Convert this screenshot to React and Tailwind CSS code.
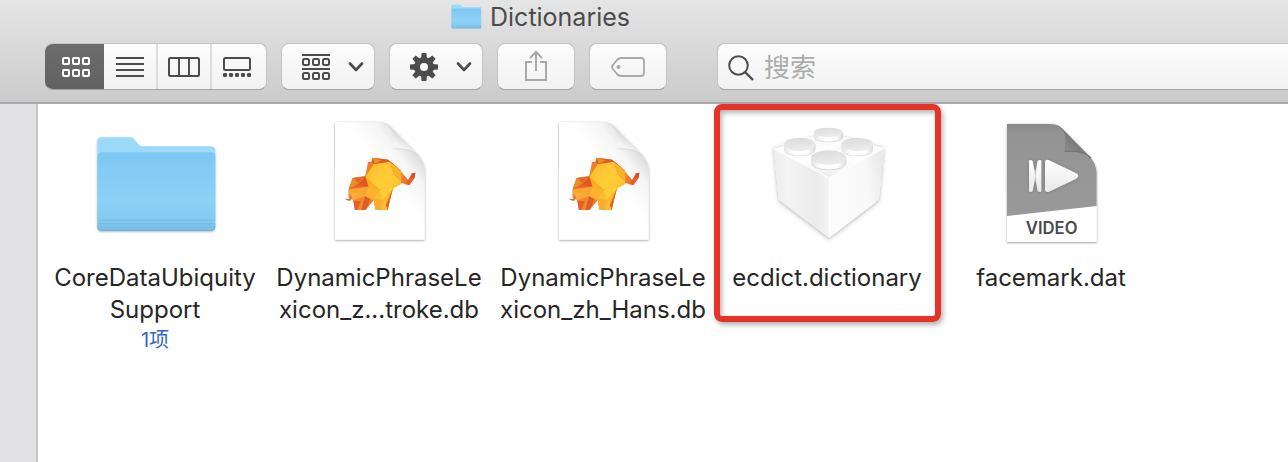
import React from "react";

function FolderShape({ id, className }) {
  return (
    <svg viewBox="0 0 128 128" className={className} aria-hidden="true">
      <defs>
        <linearGradient id={`${id}-front`} x1="0" y1="0" x2="0" y2="1">
          <stop offset="0" stopColor="#7ec7f3" />
          <stop offset="0.62" stopColor="#8dd1f7" />
          <stop offset="0.85" stopColor="#85caf0" />
          <stop offset="1" stopColor="#79bfe8" />
        </linearGradient>
        <filter id={`${id}-sh`} x="-10%" y="-10%" width="120%" height="125%">
          <feDropShadow dx="0" dy="3" stdDeviation="3" floodOpacity="0.3" />
        </filter>
      </defs>
      <g transform="translate(-11 2) scale(.33333)">
        <g filter={`url(#${id}-sh)`}>
          <path d="M52 66Q52 52 66 52H150Q159 52 164 59L174 72Q179 79 188 79H390Q406 79 406 94V320Q406 332 394 332H64Q52 332 52 320Z" fill="#9bdaf9" />
        </g>
        <path d="M52 110Q52 97 66 97H392Q406 97 406 110V320Q406 332 394 332H64Q52 332 52 320Z" fill={`url(#${id}-front)`} />
        <path d="M53 301H405M53 311H405M53 321H405" stroke="#6db4de" strokeWidth="3" opacity=".6" />
        <path d="M53 320Q54 331 64 331H394Q404 331 405 320" fill="none" stroke="#68acd4" strokeWidth="2.5" />
      </g>
    </svg>
  );
}

function MammothFile({ id }) {
  return (
    <svg viewBox="0 0 128 128" className="size-32" aria-hidden="true">
      <defs>
        <linearGradient id={`${id}-page`} x1="0.55" y1="0.45" x2="0.88" y2="0.12">
          <stop offset="0" stopColor="#ffffff" />
          <stop offset="0.5" stopColor="#f6f6f6" />
          <stop offset="1" stopColor="#cfcfcf" />
        </linearGradient>
        <linearGradient id={`${id}-curl`} x1="0.1" y1="1" x2="0.6" y2="0.35">
          <stop offset="0" stopColor="#ffffff" />
          <stop offset="0.6" stopColor="#f4f4f4" />
          <stop offset="1" stopColor="#d4d4d4" />
        </linearGradient>
        <linearGradient id={`${id}-gold`} x1="0" y1="0" x2="1" y2="1">
          <stop offset="0" stopColor="#fbb62a" />
          <stop offset="0.6" stopColor="#fdd03a" />
          <stop offset="1" stopColor="#fbbb2a" />
        </linearGradient>
        <filter id={`${id}-sh`} x="-10%" y="-10%" width="120%" height="120%">
          <feDropShadow dx="0" dy="2" stdDeviation="3" floodOpacity="0.42" />
        </filter>
      </defs>
      <g transform="translate(5 -8) scale(.33333)">
        <path d="M45 37H172Q198 37 213 52L292 132Q314 156 314 184V389H45Z" fill={`url(#${id}-page)`} filter={`url(#${id}-sh)`} />
        <path d="M180 37Q218 44 220 80L218 116Q276 112 297 139L211 50Q198 38 180 37Z" fill={`url(#${id}-curl)`} />
        <path d="M218 117Q272 112 297 139" fill="none" stroke="#cfcfcf" strokeWidth="2" />
      </g>
      <g transform="translate(25 32) scale(.33333)">
        <path d="M38 84L74 78L90 55L84 36L98 35L98 23L145 29L182 60L186 100L158 115L143 180H107L102 150L77 180H45L40 150L26 140L26 118Z" fill="#f0862a" />
        <path d="M98 23L145 29L182 62L148 37L102 43L94 36Z" fill="#dc5b22" />
        <path d="M98 23L104 42L125 31Z" fill="#f08a2c" />
        <path d="M84 36L102 43L90 57L76 78Z" fill="#ef7d29" />
        <path d="M102 43L148 35L182 62L186 100L158 116L119 119L76 80Z" fill={`url(#${id}-gold)`} />
        <path d="M148 35L158 74L119 119L112 60Z" fill="#fdcb36" opacity=".65" />
        <path d="M148 35L182 62L186 98L160 74Z" fill="#f8b12c" />
        <path d="M182 62L190 73L197 100L184 98Z" fill="#f18b27" />
        <path d="M190 73L204 90L216 70L226 68L224 84L208 106L196 103Z" fill="#e3602a" />
        <path d="M188 74L204 91L196 103L184 98Z" fill="#ed7b2b" />
        <path d="M216 70L226 68L224 84L214 84Z" fill="#ce5128" />
        <path d="M38 84L76 79L86 96L84 110L26 118Z" fill="#e66a29" />
        <path d="M38 84L54 100L26 118Z" fill="#f18c30" />
        <path d="M76 79L88 110L54 106Z" fill="#dc5824" />
        <path d="M76 79L119 119L86 112Z" fill="#faae2a" />
        <path d="M26 118L86 110L119 119L102 150L75 146L40 152L26 140Z" fill="#f8a42f" />
        <path d="M26 118L75 138L40 152L26 140Z" fill="#f9ab3a" />
        <path d="M40 150L75 138L68 180H45Z" fill="#f0862d" />
        <path d="M40 152L62 154L52 180H45Z" fill="#e2602a" />
        <path d="M75 138L92 148L77 180H64Z" fill="#de5e27" />
        <path d="M86 112L119 119L102 150L75 138Z" fill="#fbb430" />
        <path d="M119 119L160 112L150 150L143 180H107L100 146Z" fill="#fcbd30" />
        <path d="M119 119L160 112L128 150Z" fill="#fdcd3a" />
        <path d="M100 146L130 150L122 180H107Z" fill="#f9ad2d" />
        <path d="M160 112L150 150L143 180L137 166Z" fill="#e06328" />
        <path d="M28 132L36 142L32 152L24 152L14 146L28 147Z" fill="#e7723a" />
      </g>
    </svg>
  );
}

function BrickIcon() {
  const studs = [
    [385, 112, 43, 14],
    [299, 148, 47, 20],
    [472, 148, 47, 20],
    [386, 188, 53, 22],
  ];
  return (
    <svg viewBox="0 0 128 128" className="size-32" aria-hidden="true">
      <defs>
        <linearGradient id="brick-left" x1="0" y1="0.5" x2="1" y2="0.5">
          <stop offset="0" stopColor="#ededed" />
          <stop offset="0.25" stopColor="#f3f3f3" />
          <stop offset="0.8" stopColor="#ebebeb" />
          <stop offset="1" stopColor="#f4f4f4" />
        </linearGradient>
        <linearGradient id="brick-right" x1="0" y1="0.6" x2="1" y2="0.3">
          <stop offset="0" stopColor="#fcfcfc" />
          <stop offset="0.7" stopColor="#f8f8f8" />
          <stop offset="1" stopColor="#eaeaea" />
        </linearGradient>
        <linearGradient id="brick-top" x1="0" y1="0" x2="0" y2="1">
          <stop offset="0" stopColor="#fafafa" />
          <stop offset="0.6" stopColor="#ffffff" />
          <stop offset="1" stopColor="#ececec" />
        </linearGradient>
        <linearGradient id="stud-top" x1="0" y1="0" x2="0.3" y2="1">
          <stop offset="0" stopColor="#dadada" />
          <stop offset="1" stopColor="#ebebeb" />
        </linearGradient>
        <linearGradient id="stud-side" x1="0" y1="0" x2="1" y2="0">
          <stop offset="0" stopColor="#e4e4e4" />
          <stop offset="0.3" stopColor="#ffffff" />
          <stop offset="0.75" stopColor="#ffffff" />
          <stop offset="1" stopColor="#dcdcdc" />
        </linearGradient>
        <filter id="brick-sh" x="-15%" y="-10%" width="130%" height="125%">
          <feDropShadow dx="0" dy="1" stdDeviation="6" floodOpacity="0.3" />
        </filter>
        <filter id="stud-sh" x="-15%" y="-15%" width="130%" height="140%">
          <feDropShadow dx="0" dy="1" stdDeviation="2" floodOpacity="0.4" />
        </filter>
      </defs>
      <g transform="translate(-63 -23) scale(.33333)">
        <path d="M222 162L348 126H425L551 160L536 317L387 431L237 317Z" fill="#eeeeee" filter="url(#brick-sh)" />
        <path d="M222 162L348 122H425L551 160L387 248Z" fill="url(#brick-top)" />
        <path d="M222 162L387 248V431L237 317Z" fill="url(#brick-left)" />
        <path d="M551 160L387 248V431L536 317Z" fill="url(#brick-right)" />
        <path d="M223 163L387 248L550 161" fill="none" stroke="#ffffff" strokeWidth="3" />
        <path d="M387 431L237 317M387 431L536 317" fill="none" stroke="#c6c6c6" strokeWidth="2.5" />
        {studs.map(([cx, cy, rx, ry]) => (
          <g key={`${cx}-${cy}`}>
            <path
              d={`M${cx - rx} ${cy}V${cy + 13}A${rx} ${ry} 0 0 0 ${cx + rx} ${cy + 13}V${cy}Z`}
              fill="url(#stud-side)"
              filter="url(#stud-sh)"
            />
            <ellipse cx={cx} cy={cy} rx={rx} ry={ry} fill="url(#stud-top)" />
          </g>
        ))}
      </g>
    </svg>
  );
}

function VideoFile() {
  return (
    <svg viewBox="0 0 128 128" className="size-32" aria-hidden="true">
      <defs>
        <linearGradient id="video-body" x1="0" y1="0" x2="0" y2="1">
          <stop offset="0" stopColor="#8a8a8a" />
          <stop offset="0.12" stopColor="#949494" />
          <stop offset="1" stopColor="#999999" />
        </linearGradient>
        <linearGradient id="video-curl" x1="0" y1="0.9" x2="0.5" y2="0.4">
          <stop offset="0" stopColor="#9b9b9b" />
          <stop offset="0.5" stopColor="#8d8d8d" />
          <stop offset="1" stopColor="#777777" />
        </linearGradient>
        <linearGradient id="video-glyph" x1="0" y1="0" x2="0" y2="1">
          <stop offset="0" stopColor="#ffffff" />
          <stop offset="1" stopColor="#e8e8e8" />
        </linearGradient>
        <filter id="video-sh" x="-10%" y="-10%" width="120%" height="120%">
          <feDropShadow dx="0" dy="2" stdDeviation="3" floodOpacity="0.45" />
        </filter>
        <filter id="glyph-sh" x="-20%" y="-20%" width="140%" height="140%">
          <feDropShadow dx="0" dy="1" stdDeviation="5" floodOpacity="0.22" />
        </filter>
      </defs>
      <g transform="translate(3 -8) scale(.33333)">
        <path d="M51 42H177Q203 42 218 57L298 138Q320 162 320 190V396H51Z" fill="#ffffff" filter="url(#video-sh)" />
        <path d="M51 42H177Q203 42 218 57L298 138Q320 162 320 190V288L51 318Z" fill="url(#video-body)" />
        <path d="M186 42Q224 50 226 86L224 124Q282 119 303 145L217 56Q204 43 186 42Z" fill="url(#video-curl)" />
        <path d="M224 124Q282 119 303 145" fill="none" stroke="#747474" strokeWidth="4" />
        <g fill="url(#video-glyph)" filter="url(#glyph-sh)">
          <path d="M117 154Q117 150 121 150Q127 150 128 154L134 184Q136 198 134 212L128 242Q127 246 121 246Q117 246 117 242Z" />
          <path d="M154 154Q154 150 150 150Q144 150 143 154L137 184Q135 198 137 212L143 242Q144 246 150 246Q154 246 154 242Z" />
          <path d="M165 158Q165 146 177 151L259 190Q271 198 259 206L177 245Q165 249 165 238Z" />
        </g>
        <text x="185" y="372" textAnchor="middle" fill="#4a4a4a" fontFamily="Inter, sans-serif" fontWeight="600" fontSize="50">VIDEO</text>
      </g>
    </svg>
  );
}

function GridIcon() {
  return (
    <svg width="28" height="20" viewBox="0 0 28 20" fill="none" stroke="#ffffff" strokeWidth="2" aria-hidden="true">
      {[1, 13].map((y) => [1, 11, 21].map((x) => <rect key={`${x}-${y}`} x={x} y={y} width="6" height="6" rx="1" />))}
    </svg>
  );
}

function ListIcon() {
  return (
    <svg width="28" height="20" viewBox="0 0 28 20" stroke="#4c4c4c" strokeWidth="2" aria-hidden="true">
      <path d="M0 1H28M0 7H28M0 13H28M0 19H28" />
    </svg>
  );
}

function ColumnsIcon() {
  return (
    <svg width="32" height="20" viewBox="0 0 32 20" fill="none" stroke="#4c4c4c" strokeWidth="2" aria-hidden="true">
      <rect x="1" y="1" width="30" height="18" rx="1.5" />
      <path d="M11 1V19M21 1V19" />
    </svg>
  );
}

function GalleryIcon() {
  return (
    <svg width="28" height="20" viewBox="0 0 28 20" fill="none" aria-hidden="true">
      <rect x="1" y="1" width="26" height="12" rx="1.5" stroke="#4c4c4c" strokeWidth="2" />
      {[0, 6, 12, 18, 24].map((x) => <rect key={x} x={x} y="16" width="4" height="4" rx="1.2" fill="#4c4c4c" />)}
    </svg>
  );
}

function ArrangeIcon() {
  return (
    <svg width="28" height="26" viewBox="0 0 28 26" fill="none" stroke="#4c4c4c" strokeWidth="2" aria-hidden="true">
      <path d="M0 1H28M0 15H28" />
      {[5, 19].map((y) => [1, 11, 21].map((x) => <rect key={`${x}-${y}`} x={x} y={y} width="6" height="6" rx="1.5" />))}
    </svg>
  );
}

function GearIcon() {
  return (
    <svg width="28" height="28" viewBox="0 0 28 28" aria-hidden="true">
      {[0, 45, 90, 135].map((a) => (
        <path key={a} d="M11.6 0H16.4L17 6V22L16.4 28H11.6L11 22V6Z" fill="#4c4c4c" transform={`rotate(${a} 14 14)`} />
      ))}
      <circle cx="14" cy="14" r="10" fill="#4c4c4c" />
      <circle cx="14" cy="14" r="4" fill="#f8f8f8" />
    </svg>
  );
}

function Chevron() {
  return (
    <svg width="16" height="10" viewBox="0 0 16 10" fill="none" stroke="#4c4c4c" strokeWidth="2.6" strokeLinecap="round" strokeLinejoin="round" aria-hidden="true">
      <path d="M2 1.5L8 8L14 1.5" />
    </svg>
  );
}

function ShareIcon() {
  return (
    <svg width="24" height="32" viewBox="0 0 24 32" fill="none" stroke="#a9a9a9" strokeWidth="2" aria-hidden="true">
      <path d="M8 12H2V30H22V12H16" />
      <path d="M12 21V2M6 8L12 2L18 8" />
    </svg>
  );
}

function TagIcon() {
  return (
    <svg width="34" height="20" viewBox="0 0 34 20" fill="none" aria-hidden="true">
      <path d="M10 1H30Q33 1 33 4V16Q33 19 30 19H10Q8 19 6 17L2 12Q0 10 2 8L6 3Q8 1 10 1Z" stroke="#a9a9a9" strokeWidth="1.8" />
      <circle cx="7.5" cy="10" r="2" fill="#a9a9a9" />
    </svg>
  );
}

function SearchIcon() {
  return (
    <svg width="26" height="26" viewBox="0 0 26 26" fill="none" stroke="#4c4c4c" strokeWidth="2" aria-hidden="true">
      <circle cx="10.5" cy="10.5" r="9.3" />
      <path d="M17 17L25 25" strokeWidth="2.4" />
    </svg>
  );
}

const surface =
  "flex items-center rounded-lg border border-[#c3c3c3] border-b-[#a3a3a3] bg-linear-to-b from-[#fcfcfc] to-[#f2f2f2]";

function Item({ icon, lines, note, marked }) {
  return (
    <li className="relative flex w-56 shrink-0 flex-col items-center">
      {icon}
      <p className="mt-4 text-center text-2xl leading-8 text-[#262626]">
        {lines.map((line) => (
          <span key={line} className="block">{line}</span>
        ))}
      </p>
      {note && <p className="text-xl leading-7 text-[#2f68c9]">{note}</p>}
      {marked && (
        <span className="pointer-events-none absolute -top-3.5 -left-px h-[218px] w-[227px] rounded-lg border-6 border-[#e63327] shadow-[2px_3px_5px_rgba(0,0,0,0.3),inset_2px_3px_5px_rgba(0,0,0,0.3)]" />
      )}
    </li>
  );
}

export default function App() {
  return (
    <div className="flex min-h-screen flex-col overflow-hidden bg-white font-['Inter','Noto_Sans_CJK_SC',sans-serif]">
      <header className="border-b-2 border-[#aaaaaa] bg-linear-to-b from-[#e5e5e5] to-[#cbcbcb] pb-3">
        <div className="flex h-[43px] items-start gap-2 pl-[450px]">
          <FolderShape id="title-folder" className="h-8 w-8 shrink-0" />
          <h1 className="text-[25px] leading-[34px] text-[#4b4b4b]">Dictionaries</h1>
        </div>
        <div className="flex h-[47px] gap-3.5 pl-[45px]">
          <div role="group" aria-label="View" className={`${surface} w-[222px] shrink-0 overflow-hidden border-l-0`}>
            <button aria-label="Icons" className="-my-px flex h-[47px] w-[59px] items-center justify-center bg-linear-to-b from-[#6d6d6d] to-[#616161] pl-0.5"><GridIcon /></button>
            <button aria-label="List" className="flex h-full w-[54px] items-center justify-center border-r-2 border-[#dcdcdc]"><ListIcon /></button>
            <button aria-label="Columns" className="flex h-full w-[54px] items-center justify-center border-r-2 border-[#dcdcdc]"><ColumnsIcon /></button>
            <button aria-label="Gallery" className="flex h-full flex-1 items-center justify-center pr-1"><GalleryIcon /></button>
          </div>
          <button aria-label="Arrange" className={`${surface} w-[94px] shrink-0 justify-between pr-2.5 pl-5`}><ArrangeIcon /><Chevron /></button>
          <button aria-label="Actions" className={`${surface} w-[94px] shrink-0 justify-between pr-2.5 pl-5`}><GearIcon /><Chevron /></button>
          <button aria-label="Share" className={`${surface} w-[78px] shrink-0 justify-center pb-0.5`}><ShareIcon /></button>
          <button aria-label="Tags" className={`${surface} w-[78px] shrink-0 justify-center`}><TagIcon /></button>
          <label className={`${surface} ml-9 min-w-0 flex-1 gap-2.5 rounded-r-none border-r-0 pt-0.5 pl-2.5`}>
            <SearchIcon />
            <input type="text" aria-label="搜索" placeholder="搜索" className="min-w-0 flex-1 bg-transparent text-[26px] leading-8 text-[#4b4b4b] outline-none placeholder:text-[#acacac]" />
          </label>
        </div>
      </header>
      <div className="flex flex-1">
        <aside className="w-[38px] shrink-0 border-r-2 border-[#c6c6c8] bg-[#e2e2e4]" />
        <main className="min-w-0 flex-1 pt-3.5 pl-[5px]">
          <ul className="flex flex-wrap">
            <Item icon={<FolderShape id="core-folder" className="size-32" />} lines={["CoreDataUbiquity", "Support"]} note="1项" />
            <Item icon={<MammothFile id="stroke-db" />} lines={["DynamicPhraseLe", "xicon_z...troke.db"]} />
            <Item icon={<MammothFile id="hans-db" />} lines={["DynamicPhraseLe", "xicon_zh_Hans.db"]} />
            <Item icon={<BrickIcon />} lines={["ecdict.dictionary"]} marked />
            <Item icon={<VideoFile />} lines={["facemark.dat"]} />
          </ul>
        </main>
      </div>
    </div>
  );
}
